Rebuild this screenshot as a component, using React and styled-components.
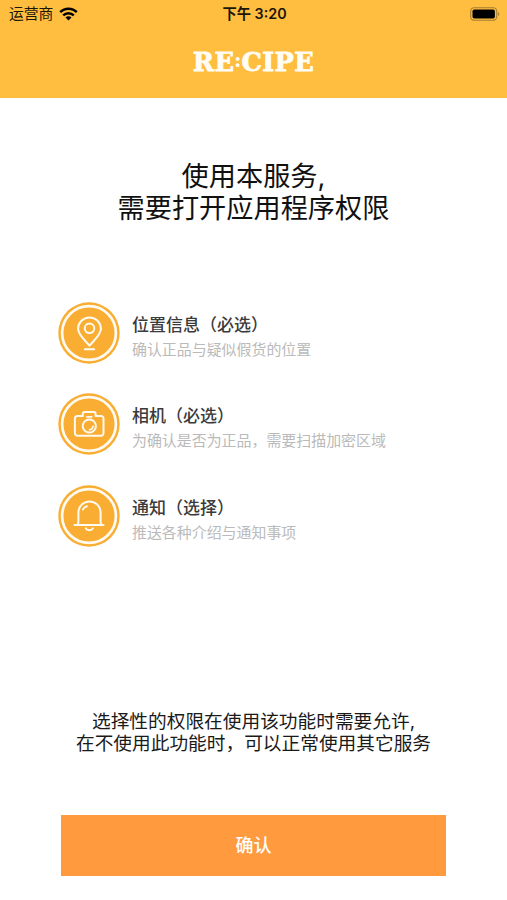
import React from "react";
import styled, { createGlobalStyle } from "styled-components";

const GlobalStyle = createGlobalStyle`
  * { box-sizing: border-box; }
  body {
    margin: 0;
    background: #fff;
    font-family: "Noto Sans CJK SC", sans-serif;
  }
  h1, h2, p { margin: 0; font-weight: 400; }
`;

const Screen = styled.main`
  width: 507px;
  height: 900px;
  display: flex;
  flex-direction: column;
  align-items: center;
  overflow: hidden;
  background: #fff;
`;

const Header = styled.header`
  width: 100%;
  height: 98px;
  flex: none;
  background: #ffbe40;
`;

const StatusBar = styled.div`
  height: 28px;
  padding: 0 7px 0 9px;
  display: grid;
  grid-template-columns: 1fr auto 1fr;
  align-items: center;
  color: #1c1608;
  font-size: 14.8px;
  line-height: 28px;
`;

const Carrier = styled.div`
  display: flex;
  align-items: center;
  gap: 6px;
  font-family: Inter, "Noto Sans CJK SC", sans-serif;
`;

const Clock = styled.div`
  font-family: Inter, "Noto Sans CJK SC", sans-serif;
  font-size: 14.3px;
  font-weight: 600;
  white-space: pre;
`;

const BatterySlot = styled.div`
  display: flex;
  justify-content: flex-end;
`;

const Logo = styled.div`
  display: flex;
  justify-content: center;
  height: 68px;
  color: #fffdf5;
  font: 700 25.6px/68px "DejaVu Serif", serif;
  letter-spacing: 0.4px;
  -webkit-text-stroke: 0.8px #fffdf5;
`;

const LogoColon = styled.span`
  width: 7px;
  display: flex;
  justify-content: center;
  font-size: 20px;
  line-height: 65px;
  -webkit-text-stroke: 0;
`;

const Heading = styled.h1`
  margin-top: 63px;
  font-family: Inter, "Noto Sans CJK SC", sans-serif;
  font-size: 27.2px;
  line-height: 32px;
  text-align: center;
  white-space: nowrap;
  color: #111;
`;

const PermissionList = styled.section`
  width: 391px;
  margin-top: 76.5px;
  display: grid;
  gap: 29.5px;
`;

const Permission = styled.article`
  height: 62px;
  display: flex;
  gap: 12px;
`;

const PermissionText = styled.div`
  padding-top: 10px;
  white-space: nowrap;
`;

const PermissionName = styled.h2`
  font-size: 17px;
  line-height: 24px;
  font-weight: 500;
  color: #3a3a3a;
`;

const PermissionNote = styled.p`
  margin-top: 1px;
  font-size: 14.95px;
  line-height: 24px;
  font-weight: 400;
  color: #bababa;
`;

const Footnote = styled.p`
  margin-top: 164px;
  font-family: Inter, "Noto Sans CJK SC", sans-serif;
  font-size: 18.7px;
  line-height: 22px;
  text-align: center;
  white-space: nowrap;
  color: #1a1a1a;
`;

const ConfirmButton = styled.button`
  width: 385px;
  height: 61px;
  margin-top: 60px;
  padding: 0;
  border: 0;
  background: #ff9b3e;
  color: #fff;
  font: 500 18px/61px Inter, "Noto Sans CJK SC", sans-serif;
`;

const WifiIcon = () => (
  <svg width="19" height="14" viewBox="0 0 19 14" fill="none" stroke="#000" strokeWidth="2.5">
    <path d="M1.2 5.2C5.8 .5 13.2 .5 17.8 5.2" />
    <path d="M4.2 8.4c3-3 7.6-3 10.6 0" />
    <path d="M9.5 13.6 6.5 10.5c1.7-1.6 4.3-1.6 6 0z" fill="#000" stroke="none" />
  </svg>
);

const BatteryIcon = () => (
  <svg width="30" height="14" viewBox="0 0 30 14">
    <rect x=".7" y=".7" width="26" height="12.6" rx="3.6" fill="none" stroke="#a77e30" strokeWidth="1.1" />
    <rect x="2.5" y="2.5" width="22.4" height="9" rx="1.8" fill="#000" />
    <path d="M28 5v4c1.8-.6 1.8-3.4 0-4z" fill="#a77e30" />
  </svg>
);

const Badge = ({ children }) => (
  <svg width="62" height="62" viewBox="0 0 62 62" fill="none" stroke="#fffaf0" strokeWidth="2" strokeLinecap="round" strokeLinejoin="round">
    <circle cx="31" cy="31" r="30.7" fill="#f9ad32" stroke="none" />
    <circle cx="31" cy="31" r="26.9" strokeWidth="2.7" />
    {children}
  </svg>
);

const PinBadge = () => (
  <Badge>
    <path d="M31.5 43.7C28 39 20.1 33.3 20.1 26.8a11.4 11.4 0 0 1 22.8 0C42.9 33.3 35 39 31.5 43.7z" />
    <circle cx="31.5" cy="26.3" r="4.8" />
    <path d="M26.8 47.2h9.4" />
  </Badge>
);

const CameraBadge = () => (
  <Badge>
    <path d="M19.5 22.9h5.3v-2.2a1.8 1.8 0 0 1 1.8-1.8h9.2a1.8 1.8 0 0 1 1.8 1.8v2.2h5.3a2.6 2.6 0 0 1 2.6 2.6v14.6a2.6 2.6 0 0 1-2.6 2.6H19.5a2.6 2.6 0 0 1-2.6-2.6V25.5a2.6 2.6 0 0 1 2.6-2.6z" />
    <circle cx="31.3" cy="33" r="6.6" />
    <path d="M28.8 23.9h5M35 33.3a3.7 3.7 0 0 1-3.5 3.5" strokeWidth="1.6" />
  </Badge>
);

const BellBadge = () => (
  <Badge>
    <path d="M16.5 40.1h29M19.3 40c.9-.8 1.1-2 1.1-3.6V27.5a11.1 11.1 0 0 1 22.2 0v8.9c0 1.6.2 2.8 1.1 3.6" />
    <path d="M27.8 43.4c1 2.4 6 2.4 7 0M24.9 24.5c.7-1.8 1.9-2.8 4-3.3" />
  </Badge>
);

const permissions = [
  { name: "位置信息（必选）", note: "确认正品与疑似假货的位置", Icon: PinBadge },
  { name: "相机（必选）", note: "为确认是否为正品，需要扫描加密区域", Icon: CameraBadge },
  { name: "通知（选择）", note: "推送各种介绍与通知事项", Icon: BellBadge },
];

export default function App() {
  return (
    <Screen lang="zh-CN">
      <GlobalStyle />
      <Header>
        <StatusBar>
          <Carrier>运营商<WifiIcon /></Carrier>
          <Clock>下午 3:20</Clock>
          <BatterySlot><BatteryIcon /></BatterySlot>
        </StatusBar>
        <Logo>RE<LogoColon>:</LogoColon>CIPE</Logo>
      </Header>
      <Heading>使用本服务,<br />需要打开应用程序权限</Heading>
      <PermissionList>
        {permissions.map(({ name, note, Icon }) => (
          <Permission key={name}>
            <Icon />
            <PermissionText>
              <PermissionName>{name}</PermissionName>
              <PermissionNote>{note}</PermissionNote>
            </PermissionText>
          </Permission>
        ))}
      </PermissionList>
      <Footnote>选择性的权限在使用该功能时需要允许,<br />在不使用此功能时，可以正常使用其它服务</Footnote>
      <ConfirmButton>确认</ConfirmButton>
    </Screen>
  );
}
